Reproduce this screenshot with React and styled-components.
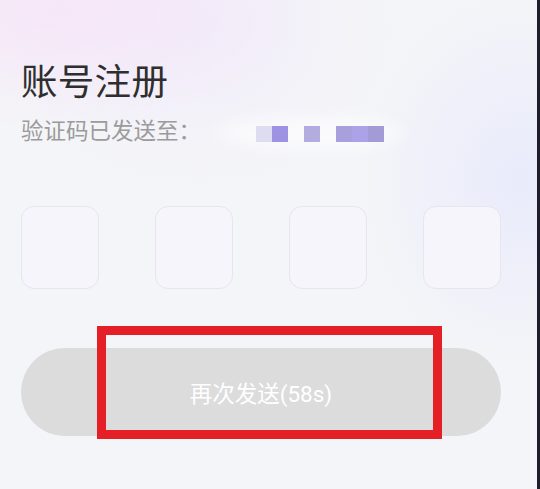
import styled, { createGlobalStyle } from 'styled-components'

const GlobalStyle = createGlobalStyle`
   html, body {
      margin: 0;
      padding: 0;
   }
   body {
      font-family: "Noto Sans CJK SC", "Noto Sans", sans-serif;
      background: #f4f5f8;
   }
`

// 화면 전체 (본문 + 오른쪽 어두운 테두리)
const Screen = styled.div`
   display: flex;
   width: 540px;
   height: 489px;
   overflow: hidden;
`

const Main = styled.main`
   position: relative;
   flex: 1;
   display: flex;
   flex-direction: column;
   padding: 62px 36px 0 21px;
   background:
      radial-gradient(ellipse 260px 120px at 60px 10px, rgba(246, 228, 248, 0.9), rgba(246, 228, 248, 0) 100%),
      radial-gradient(ellipse 200px 160px at 200px 30px, rgba(240, 236, 250, 0.8), rgba(240, 236, 250, 0) 100%),
      radial-gradient(ellipse 160px 190px at 520px 180px, rgba(232, 234, 251, 0.95), rgba(232, 234, 251, 0) 100%),
      #f4f5f8;
`

const Edge = styled.div`
   width: 3px;
   background: #1d1d2b;
`

const Title = styled.h1`
   margin: 0;
   font-size: 36.5px;
   line-height: 36px;
   font-weight: 400;
   color: #2e2e2e;
   letter-spacing: 0.3px;
`

const SubRow = styled.div`
   display: flex;
   align-items: flex-start;
   margin-top: 20px;
   height: 23px;
`

const SubText = styled.span`
   font-size: 22.5px;
   line-height: 23px;
   color: #9b9b9b;
   width: 235px;
`

// 가려진 전화번호 (모자이크)
const Mosaic = styled.div`
   position: relative;
   display: flex;
   height: 16px;
   margin-top: 8px;

   &::before {
      content: '';
      position: absolute;
      left: -40px;
      right: -20px;
      top: -10px;
      bottom: -8px;
      border-radius: 50%;
      background: rgba(255, 255, 255, 0.6);
      filter: blur(8px);
   }
`

const Pixel = styled.span`
   position: relative;
   width: ${(props) => props.w || 16}px;
   height: 16px;
   background: ${(props) => props.color || 'transparent'};
`

const CodeRow = styled.div`
   display: flex;
   justify-content: space-between;
   margin-top: 65px;
`

const CodeBox = styled.div`
   width: 76px;
   height: 81px;
   border: 1px solid #e7e5ee;
   border-radius: 13px;
   background: #f6f5fc;
`

const ResendButton = styled.button`
   margin-top: 59px;
   height: 88px;
   width: 100%;
   border: none;
   border-radius: 44px;
   background: #dcdcdc;
   color: #ffffff;
   font-family: Roboto, "Noto Sans CJK SC", sans-serif;
   font-size: 22.5px;
   font-weight: 400;
   padding: 0;
`

// 빨간 강조 표시 (스크린샷 위의 주석)
const Highlight = styled.div`
   position: absolute;
   left: 97px;
   top: 326px;
   width: 345px;
   height: 113px;
   box-sizing: border-box;
   border: 9px solid #e41f26;
   pointer-events: none;
`

function App() {
   return (
      <>
         <GlobalStyle />
         <Screen>
            <Main>
               <Title>账号注册</Title>
               <SubRow>
                  <SubText>验证码已发送至：</SubText>
                  <Mosaic>
                     <Pixel color="#dedcf1" />
                     <Pixel color="#9c94e2" />
                     <Pixel />
                     <Pixel color="#b1addf" />
                     <Pixel />
                     <Pixel color="#a8a0dc" />
                     <Pixel color="#aba2e8" />
                     <Pixel color="#a19cd6" />
                  </Mosaic>
               </SubRow>
               <CodeRow>
                  <CodeBox />
                  <CodeBox />
                  <CodeBox />
                  <CodeBox />
               </CodeRow>
               <ResendButton type="button">再次发送(58s)</ResendButton>
               <Highlight />
            </Main>
            <Edge />
         </Screen>
      </>
   )
}

export default App
